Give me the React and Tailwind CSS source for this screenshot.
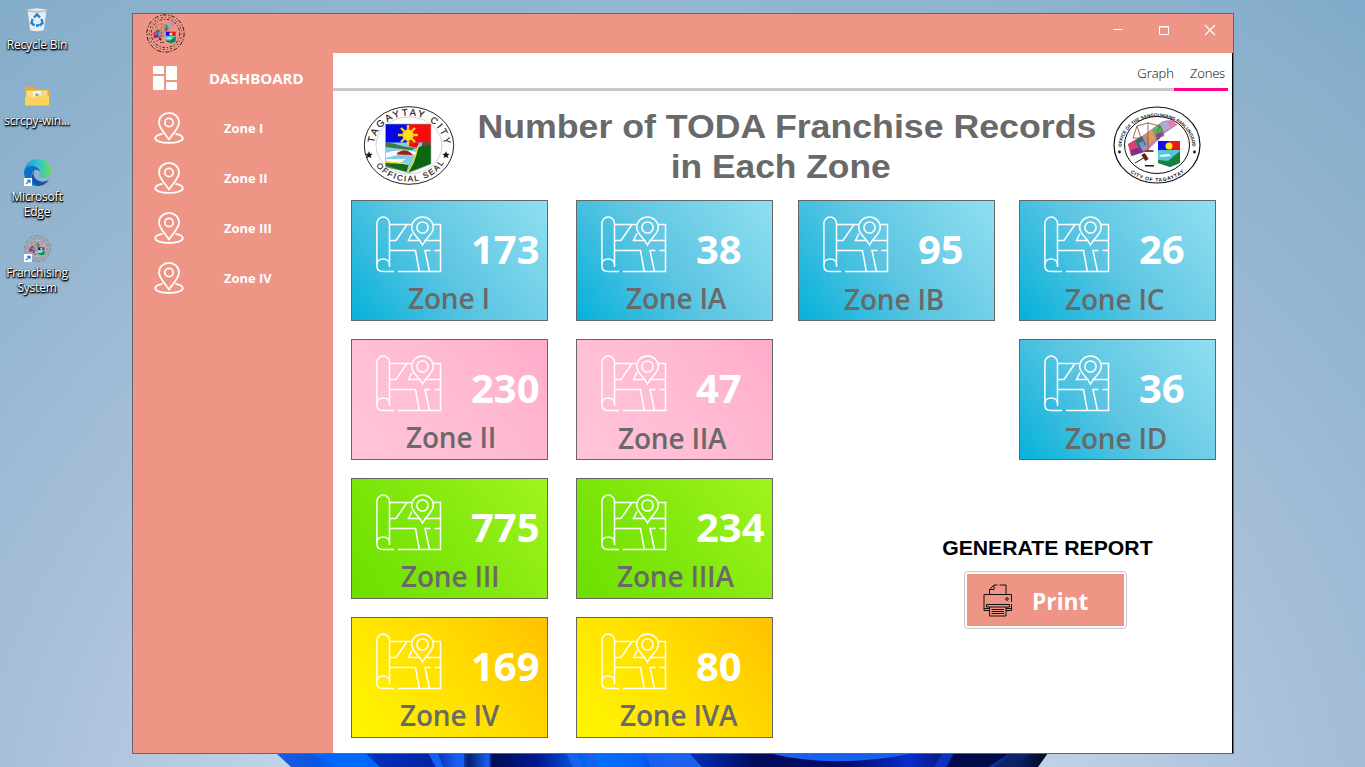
const OS = "font-['Open_Sans',sans-serif]";

function PinIcon() {
  return (
    <svg className="h-8 w-[30px]" viewBox="0 0 30 32" fill="none" stroke="#fff" strokeWidth="1.8">
      <path d="M15 27.5C12 23 5 16 5 10.5a10 9.6 0 0 1 20 0C25 16 18 23 15 27.5z" />
      <circle cx="15" cy="10.5" r="4.2" />
      <path d="M8.5 21.8C4 22.6 1.2 24.2 1.2 26.2c0 2.700 6 4.700 13.800 4.700s13.800-2 13.800-4.700c0-2-2.800-3.600-7.300-4.400" />
    </svg>
  );
}

function DashIcon() {
  return (
    <svg className="h-6 w-6" viewBox="0 0 24 24" fill="#fff">
      <rect x="0" y="0" width="11" height="8" rx="1" />
      <rect x="0" y="10" width="11" height="14" rx="1" />
      <rect x="13" y="0" width="11" height="14" rx="1" />
      <rect x="13" y="16" width="11" height="8" rx="1" />
    </svg>
  );
}

function MapIcon() {
  return (
    <svg className="h-[57px] w-[67px]" viewBox="0 0 67 57" fill="none" stroke="#fff" strokeWidth="1.5">
      <path d="M13.500 51V7.500a6.300 6.500 0 0 0-12.600 0V50c0 3.500 2.500 5.500 6 5.500H18" />
      <path d="M.9 48.500c0-3.600 2.800-5.600 6.300-5.600s6.300 2 6.300 5.600" />
      <path d="M13.500 8.500H35.500M57 8.500H64.500V55.500H22" />
      <path d="M31 8.500L20 24.500H13.500M36 17.500L32.500 24.500H44.500M48.500 24.500H64.500" />
      <path d="M13.500 34.500H39.500L43.300 55.500M64.500 34.500H58.500M54.500 34.500H49L53.500 55.500" />
      <path d="M46.500 29C43.500 22.500 35.700 18 35.700 11.500a10.800 10.600 0 0 1 21.600 0C57.300 18 49.500 22.500 46.500 29z" />
      <circle cx="46.500" cy="11.500" r="5.600" />
    </svg>
  );
}

function PrinterIcon() {
  return (
    <svg className="h-[33px] w-[30px]" viewBox="0 0 30 33" fill="none" stroke="#111" strokeWidth="1">
      <path d="M6.500 10.500V5.500L11 1H14.500M16.500 1H23V10.500M11 1V5.500H6.500" />
      <path d="M28.500 18V10.500H1V26.500H6.500M28.500 20V26.500H23" />
      <path d="M1 24.500H6.500M23 24.500H28.500M3.500 20.500H26.500V23H3.500zM6.500 23V32H23V23" />
      <path d="M8.500 25.500H21M8.500 27.500H21M8.500 29.500H21" />
      <circle cx="24" cy="15" r="1.300" />
    </svg>
  );
}

function CitySeal() {
  return (
    <svg className="h-20 w-[92px]" viewBox="0 0 92 80" fill="none">
      <defs>
        <path id="cityTop" d="M11 40a35 30.500 0 0 1 70 0" />
        <path id="cityBottom" d="M6.500 40a39.500 35.500 0 0 0 79 0" />
      </defs>
      <ellipse cx="46" cy="39.500" rx="44.700" ry="38.800" fill="#fff" stroke="#222" strokeWidth="1" />
      <ellipse cx="46" cy="39.500" rx="33" ry="28.500" stroke="#bbb" strokeWidth=".7" />
      <path d="M22.500 18H46V40H22.500z" fill="#0606e6" />
      <path d="M46 18H68V40H46z" fill="#f40b0b" />
      <path d="M22.500 36.500H68V58L46 67 22.500 60z" fill="#83cbe6" />
      <path d="M46 36.500H56L54 42 46 40z" fill="#f40b0b" />
      <path d="M22.500 37c6-1 14 3 21 4l9 1-4 2c-10-1-18-2-26-3z" fill="#3b7a3a" />
      <path d="M22.500 47c10-3 18-3 31-1v3c-12-2-20 0-31 3zM22.500 53h20l-5 4-15-2z" fill="#f6fbff" />
      <path d="M34 47c6-3 8-4 14 0l2 2-16-.5z" fill="#a61d12" />
      <path d="M22.500 56c9 1 15 1 23 3l-2 7-21-5z" fill="#176b20" />
      <path d="M68 38c-8 1-13 2-14 7l-3 10-6 11.500L68 58z" fill="#0a6611" />
      <path d="M22.500 56c9 1 15 1 22 2M55 40l-2 8-3 9-5 9" stroke="#f3df22" strokeWidth="1.300" />
      <path d="M59 37l3-2 6 1v3l-9 1z" fill="#794039" />
      <g stroke="#ffcf16" strokeWidth="2.400">
        <path d="M45 19v20M35 29h20M38 22l14 14M52 22L38 36" />
      </g>
      <circle cx="45" cy="29" r="5.500" fill="#ffe119" stroke="#db941c" strokeWidth=".6" />
      <path d="M22.500 18H68V58L46 67 22.500 60z" stroke="#aaa" strokeWidth=".6" />
      <g fill="#151515" stroke="#151515" strokeWidth=".2" className="font-['Liberation_Sans',sans-serif]" fontSize="9.500">
        <text><textPath href="#cityTop" startOffset="3" textLength="98">TAGAYTAY CITY</textPath></text>
        <text fontSize="8"><textPath href="#cityBottom" startOffset="21" textLength="79">OFFICIAL SEAL</textPath></text>
        <path d="M6 45.500l1 2.300 2.500.2-1.900 1.600.6 2.400L6 50.700 3.800 52l.6-2.400L2.500 48l2.500-.2zM83 45.500l1 2.300 2.500.2-1.900 1.600.6 2.400-2.200-1.300-2.200 1.300.6-2.400-1.900-1.600 2.500-.2z" />
      </g>
    </svg>
  );
}

function CouncilArt() {
  return (
    <g>
      <path d="M15 38L29 30 50 15 60 14 64 19 52 27 34 45 18 50z" fill="#b58aa8" />
      <path d="M15 38l7-4 3 8-7 8z" fill="#df3d72" />
      <path d="M22 34l7-4 4 9-8 3z" fill="#3e6c64" />
      <path d="M18 44l9-3 4 5-12 4z" fill="#7b3187" />
      <path d="M26 37l4-2 2 5-4 2z" fill="#5c9fd8" />
      <path d="M40 23l7-5 4 8-7 7z" fill="#51b965" />
      <path d="M47 18l7-4 4 7-7 5z" fill="#a7add6" />
      <path d="M54 15l6-1 4 5-6 3z" fill="#de7eb4" />
      <path d="M33 28l6-4 3 9-6 5z" fill="#e49b52" />
      <path d="M43 29l5-3 2 3-6 6z" fill="#8f3bb0" />
      <path d="M35 16V44M24 20l11-3 12 3M24 20l-4 12h8zM47 20l-4 10h8z" stroke="#84502c" strokeWidth=".8" fill="none" />
      <path d="M32 44h8l1 2H31z" fill="#7e482b" />
      <path d="M22 57l12-7" stroke="#30140f" strokeWidth="1" />
      <path d="M30 48l4 6" stroke="#5a241c" strokeWidth="4" />
      <path d="M32 59h9v1.500h-9z" fill="#35150f" />
      <path d="M45 35H56V45H45z" fill="#1111e3" />
      <path d="M56 35H67V45H56z" fill="#ed1717" />
      <path d="M45 44H67V57L57 61 45 57z" fill="#56c5d8" />
      <path d="M45 54l10 1 12-10V57L57 61 45 57z" fill="#11853a" />
      <path d="M46 49l10-1 2 2-10 1z" fill="#eaffff" />
      <circle cx="56" cy="40" r="3.500" fill="#ffe522" />
    </g>
  );
}

function CouncilSeal() {
  return (
    <svg className="h-[78px] w-[88px]" viewBox="0 0 88 78" fill="none">
      <defs>
        <path id="councilTop" d="M8.500 42a35.500 31.500 0 1 1 71 0l0 6" />
        <path id="councilBottom" d="M5.500 43a38.500 32.500 0 0 0 77 0" />
      </defs>
      <ellipse cx="44" cy="39" rx="43" ry="38" fill="#fff" stroke="#111" strokeWidth="1.200" />
      <ellipse cx="44" cy="39" rx="32.500" ry="28.500" stroke="#111" strokeWidth="1" />
      <CouncilArt />
      <g fill="#111" className="font-['Liberation_Sans',sans-serif] font-bold" fontSize="4.600">
        <text><textPath href="#councilTop" startOffset="1" textLength="103" lengthAdjust="spacingAndGlyphs">OFFICE OF THE SANGGUNIANG PANLUNGSOD</textPath></text>
        <text fontSize="5"><textPath href="#councilBottom" startOffset="27" textLength="58">CITY OF TAGAYTAY</textPath></text>
        <circle cx="6.500" cy="46" r="1.400" />
        <circle cx="81.500" cy="46" r="1.400" />
      </g>
    </svg>
  );
}

function SmallSeal({ className, ring, fill }) {
  return (
    <svg className={className} viewBox="0 0 88 88" fill="none">
      <circle cx="44" cy="44" r="42" fill={fill} stroke={ring} strokeWidth="2.200" strokeDasharray="9 4 3 3" />
      <circle cx="44" cy="44" r="36.500" stroke={ring} strokeWidth="2" strokeDasharray="2 6 4 5" />
      <circle cx="44" cy="44" r="32" stroke={ring} strokeWidth="2" strokeDasharray="6 4 3 4" />
      <g transform="translate(0 5)"><CouncilArt /></g>
    </svg>
  );
}

function Shortcut() {
  return (
    <svg className="absolute bottom-0 left-0 h-2 w-2" viewBox="0 0 8 8" fill="none">
      <path d="M0 0h8v8H0z" fill="#fff" />
      <path d="M2 6.200L5.600 2.500M3 2.200h3v3" stroke="#1976c5" strokeWidth="1.100" />
    </svg>
  );
}

function DesktopIcon({ children, className, lines }) {
  return (
    <div className={`flex h-[76px] w-[74px] flex-col items-center ${className}`}>
      <div className="relative flex h-7 w-[27px] shrink-0 items-center justify-center">{children}</div>
      <div className={`mt-[3px] text-center text-[12px] leading-[15px] tracking-[-0.22px] whitespace-nowrap text-white [text-shadow:0_1px_2px_#000,1px_1px_1px_#000,0_1px_2px_#000] ${OS}`}>
        {lines.map((l) => <div key={l}>{l}</div>)}
      </div>
    </div>
  );
}

function Desktop() {
  return (
    <div className="flex w-[132px] shrink-0 flex-col">
      <DesktopIcon className="pt-[6px]" lines={["Recycle Bin"]}>
        <svg className="h-6 w-5" viewBox="0 0 20 24">
          <path d="M.5 1.500L10 .2l9.500 1.300-2.700 20.800q-7 2-13.600 0z" fill="#e9ecef" />
          <path d="M.5 1.500Q10 4 19.500 1.500l-.3 2Q10 6 .8 3.500z" fill="#bfc6cb" />
          <path d="M7 9.500l3-3 3 3M14.500 11l1 4-3 2.500M5.500 11l-1 4 3 2.500M9 17.500h3" fill="none" stroke="#1685dc" strokeWidth="2.300" />
        </svg>
      </DesktopIcon>
      <DesktopIcon className="pt-[6px]" lines={["scrcpy-win..."]}>
        <svg className="h-5 w-6" viewBox="0 0 24 20">
          <path d="M0 2Q0 .5 1.500.5H8l2.500 2.500H22.500Q24 3 24 4.500V19H0z" fill="#e9aa2f" />
          <path d="M1.500 4.500H22.500V17H1.500z" fill="#fbd98a" />
          <path d="M8 5h8v9H8z" fill="#f1f2f4" />
          <circle cx="12" cy="9.500" r="2" fill="#8b949d" />
          <path d="M0 11h9l2-1.500H24V18q0 1.500-1.500 1.500H1.500Q0 19.500 0 18z" fill="#ffd45c" />
        </svg>
      </DesktopIcon>
      <DesktopIcon className="pt-[6px]" lines={["Microsoft", "Edge"]}>
        <svg className="h-[27px] w-[27px]" viewBox="0 0 27 27">
          <defs>
            <linearGradient id="edgeTop" x1="0" x2="1"><stop stopColor="#1597db" /><stop offset=".55" stopColor="#32c5d1" /><stop offset="1" stopColor="#64e34b" /></linearGradient>
          </defs>
          <path d="M0 13C1 5 6.500 0 13.500 0 21.500 0 27 5.500 27 11.500c0 5-3.500 7.500-7.500 7.500-3 0-4.500-1-4.500-2 0-1 1.500-1.500 1.500-4 0-4-4-6-8-6C4.500 7 1.500 9.500 0 13z" fill="url(#edgeTop)" />
          <path d="M0 13c1-4 4-6 8-6 4.500 0 8 2.500 8 6-1.500-2-3-2.500-4.500-2-3.500 1-5 6-3 10 1 2.500 3 5 6 6C6 27.500 0 21 0 13z" fill="#0b72c9" />
          <path d="M11 11c-3 4-1 9 4 11 4 1.500 7 .5 10-1.500-2.500 4.500-7 6.500-11 6.500C8 25.500 5.500 16 11 11z" fill="#1453a5" />
        </svg>
        <Shortcut />
      </DesktopIcon>
      <DesktopIcon className="pt-[6px]" lines={["Franchising", "System"]}>
        <SmallSeal className="h-[27px] w-[27px]" ring="#5f6b76" fill="#a9b2bc" />
        <Shortcut />
      </DesktopIcon>
    </div>
  );
}

const BLUE = "bg-[linear-gradient(52deg,#05b1da_0%,#5cc5e2_45%,#90dff0_100%)]";
const PINK = "bg-[linear-gradient(52deg,#ffc4da_0%,#ffbcd4_50%,#ffaccb_100%)]";
const GREEN = "bg-[linear-gradient(52deg,#6cdf00_0%,#82e80e_50%,#a0f41e_100%)]";
const YELLOW = "bg-[linear-gradient(52deg,#fff600_0%,#ffe000_50%,#ffc200_100%)]";

const zones = [
  { name: "Zone I", count: 173, bg: BLUE, place: "col-start-1 row-start-1", pad: "pl-[56px]" },
  { name: "Zone IA", count: 38, bg: BLUE, place: "col-start-2 row-start-1", pad: "pl-[49px]" },
  { name: "Zone IB", count: 95, bg: BLUE, place: "col-start-3 row-start-1", pad: "pl-[45px] pt-px" },
  { name: "Zone IC", count: 26, bg: BLUE, place: "col-start-4 row-start-1", pad: "pl-[45px] pt-px" },
  { name: "Zone II", count: 230, bg: PINK, place: "col-start-1 row-start-2", pad: "pl-[54px]" },
  { name: "Zone IIA", count: 47, bg: PINK, place: "col-start-2 row-start-2", pad: "pl-[41px] pt-px" },
  { name: "Zone ID", count: 36, bg: BLUE, place: "col-start-4 row-start-2", pad: "pl-[45px] pt-px" },
  { name: "Zone III", count: 775, bg: GREEN, place: "col-start-1 row-start-3", pad: "pl-[49px]" },
  { name: "Zone IIIA", count: 234, bg: GREEN, place: "col-start-2 row-start-3", pad: "pl-[40px]" },
  { name: "Zone IV", count: 169, bg: YELLOW, place: "col-start-1 row-start-4", pad: "pl-[48px]" },
  { name: "Zone IVA", count: 80, bg: YELLOW, place: "col-start-2 row-start-4", pad: "pl-[43px]" },
];

function ZoneCard({ name, count, bg, place, pad }) {
  return (
    <div className={`flex h-[121px] w-[197px] flex-col border border-[#666] whitespace-nowrap ${OS} ${bg} ${place}`}>
      <div className="flex h-[78px] shrink-0 pt-[15px] pl-6">
        <MapIcon />
        <div className="ml-[28px] pt-[5px] text-[40px] leading-[56px] font-bold text-white">{count}</div>
      </div>
      <div className={`text-[28px] leading-[38px] font-semibold tracking-[-0.2px] text-[#696969] ${pad}`}>{name}</div>
    </div>
  );
}

function Wallpaper() {
  return (
    <svg className="absolute bottom-0 left-[270px] h-[14px] w-[790px]" viewBox="270 753 790 14" preserveAspectRatio="none">
      <defs>
        <linearGradient id="bloom" gradientUnits="userSpaceOnUse" x1="276" x2="1048" y1="0" y2="0">
          <stop stopColor="#1b5fe0" /><stop offset=".05" stopColor="#0b55dd" /><stop offset=".09" stopColor="#0068fa" />
          <stop offset=".13" stopColor="#0030b8" /><stop offset=".2" stopColor="#0024a5" /><stop offset=".235" stopColor="#1760f0" />
          <stop offset=".25" stopColor="#062173" /><stop offset=".275" stopColor="#1860ef" /><stop offset=".28" stopColor="#020d55" />
          <stop offset=".34" stopColor="#001a93" /><stop offset=".41" stopColor="#0072fb" /><stop offset=".47" stopColor="#0862f8" />
          <stop offset=".51" stopColor="#0738c1" /><stop offset=".56" stopColor="#0325a0" /><stop offset=".62" stopColor="#020c5b" />
          <stop offset=".74" stopColor="#020e68" /><stop offset=".82" stopColor="#082dcc" /><stop offset=".89" stopColor="#041052" />
          <stop offset=".93" stopColor="#1233a0" /><stop offset="1" stopColor="#01071f" />
        </linearGradient>
      </defs>
      <path d="M276 753H1048L1038 767H291z" fill="url(#bloom)" />
      <path d="M310 753h55l15 14H338z" fill="#0068fb" />
      <path d="M428 753h10l5 14h-7zM454 753h10v14h-5zM566 753h12l6 14h-11zM584 753h10l6 14h-10zM646 753h15l5 14h-16z" fill="#155ff1" />
      <path d="M661 753h28l13 14H665z" fill="#1d62ee" />
      <path d="M770 753H915Q865 763 825 761 790 759 770 753z" fill="#1661ef" />
      <path d="M942 753h12l-8 14h-12z" fill="#0c31bd" />
      <path d="M954 753h56l-22 14h-40z" fill="#020b49" />
      <path d="M1014 753l-20 14h20l16-14z" fill="#0d2363" />
    </svg>
  );
}

export default function App() {
  return (
    <div className="relative flex h-[767px] w-[1365px] overflow-hidden bg-[radial-gradient(circle_at_660px_900px,#c0d2e5_400px,#a9c0da_650px,#98b7d1_850px,#86aecb_1080px,#7da8c9_1180px)]">
      <Wallpaper />
      <Desktop />
      <div className="relative mt-[13px] flex h-[741px] w-[1102px] flex-col border border-[#666] bg-white">
        <header className="flex h-[39px] shrink-0 items-start justify-between bg-[#ee9586] pl-[13px]">
          <SmallSeal className="h-[39px] w-[39px]" ring="#1d1715" fill="none" />
          <div className="flex pt-[10px] pr-[16px] text-white">
            <svg className="h-3 w-[104px]" viewBox="0 0 104 12" fill="none" stroke="#fff" shapeRendering="geometricPrecision">
              <path d="M.5 5.500h9" />
              <path d="M46.500 2.500h9v8h-9zM46 3h10" />
              <path d="M92 1l10 10M102 1l-10 10" strokeWidth="1.100" />
            </svg>
          </div>
        </header>
        <div className="flex min-h-0 grow">
          <aside className={`w-[200px] shrink-0 bg-[#ee9586] font-bold text-white ${OS}`}>
            <div className="flex h-[50px] items-center pl-5">
              <DashIcon />
              <span className="ml-8 text-[15px] leading-5">DASHBOARD</span>
            </div>
            {["Zone I", "Zone II", "Zone III", "Zone IV"].map((z) => (
              <div key={z} className="flex h-[50px] items-center pl-[21px]">
                <PinIcon />
                <span className="ml-10 pb-px text-[12.9px] leading-5">{z}</span>
              </div>
            ))}
          </aside>
          <main className="flex grow flex-col border-r border-black">
            <nav className={`flex h-[38px] shrink-0 text-[13px] text-black ${OS}`}>
              <div className="flex grow justify-end border-b-[3px] border-[#c8c8c8] pt-[11px] leading-[18px] font-light">
                Graph
              </div>
              <div className="w-[54px] border-b-[3px] border-[#ff0090] pt-[11px] pl-4 leading-[18px] font-light tracking-[-0.2px]">Zones</div>
              <div className="w-1" />
            </nav>
            <section className="flex h-[109px] shrink-0 pt-[15px] pl-[30px]">
              <CitySeal />
              <h1 className="flex w-[658px] flex-col items-center font-['Liberation_Sans',sans-serif] text-[34px] leading-10 font-bold whitespace-nowrap text-[#696969]">
                <span className="scale-x-[1.05] pl-[5px]">Number of TODA Franchise Records</span>
                <span className="scale-x-[1.04] pr-[6px]">in Each Zone</span>
              </h1>
              <CouncilSeal />
            </section>
            <section className="grid grid-cols-[225px_222px_221px_197px] gap-y-[18px] pl-[18px]">
              {zones.map((z) => <ZoneCard key={z.name} {...z} />)}
              <div className="col-span-2 col-start-3 row-span-2 row-start-3 flex flex-col items-start pt-[58px]">
                <div className="origin-left scale-x-[1.06] pl-[136px] font-['Liberation_Sans',sans-serif] text-[20px] leading-6 font-bold whitespace-nowrap text-black">GENERATE REPORT</div>
                <button className="mt-[11px] ml-[166px] flex h-[58px] w-[163px] shrink-0 rounded-[4px] border border-[#c5c5c5] bg-white p-[2px]">
                  <span className={`flex h-full w-full items-center bg-[#ee9586] pl-4 text-[22.8px] font-bold text-white ${OS}`}>
                    <PrinterIcon />
                    <span className="ml-[19px] pt-[3px] leading-7">Print</span>
                  </span>
                </button>
              </div>
            </section>
          </main>
        </div>
      </div>
    </div>
  );
}
